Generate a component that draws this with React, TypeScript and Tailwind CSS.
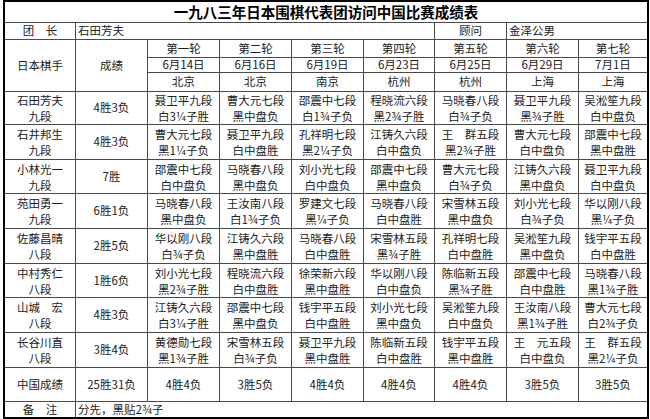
import React from "react";

const rounds = [
  ["第一轮", "6月14日", "北京"],
  ["第二轮", "6月16日", "北京"],
  ["第三轮", "6月19日", "南京"],
  ["第四轮", "6月23日", "杭州"],
  ["第五轮", "6月25日", "杭州"],
  ["第六轮", "6月29日", "上海"],
  ["第七轮", "7月1日", "上海"],
];

type Row = { name: string; rank: string; score: string; games: [string, string][] };

const rows: Row[] = [
  {
    name: "石田芳夫", rank: "九段", score: "4胜3负",
    games: [
      ["聂卫平九段", "白3¼子胜"], ["曹大元七段", "黑中盘负"], ["邵震中七段", "白1¾子负"],
      ["程晓流六段", "黑2¾子胜"], ["马晓春八段", "白¾子负"], ["聂卫平九段", "黑¾子胜"], ["吴淞笙九段", "白中盘负"],
    ],
  },
  {
    name: "石井邦生", rank: "九段", score: "4胜3负",
    games: [
      ["曹大元七段", "黑1¼子负"], ["聂卫平九段", "白中盘胜"], ["孔祥明七段", "黑2¼子负"],
      ["江铸久六段", "白中盘负"], ["王　群五段", "黑2¾子胜"], ["曹大元七段", "白中盘负"], ["邵震中七段", "黑中盘胜"],
    ],
  },
  {
    name: "小林光一", rank: "九段", score: "7胜",
    games: [
      ["邵震中七段", "白中盘负"], ["马晓春八段", "黑中盘负"], ["刘小光七段", "白中盘负"],
      ["邵震中七段", "黑中盘负"], ["曹大元七段", "白¾子负"], ["江铸久六段", "黑中盘负"], ["聂卫平九段", "白中盘负"],
    ],
  },
  {
    name: "苑田勇一", rank: "九段", score: "6胜1负",
    games: [
      ["马晓春八段", "黑中盘负"], ["王汝南八段", "白1¾子负"], ["罗建文七段", "黑¼子负"],
      ["马晓春八段", "白中盘胜"], ["宋雪林五段", "黑中盘负"], ["刘小光七段", "白¾子负"], ["华以刚八段", "黑¼子负"],
    ],
  },
  {
    name: "佐藤昌晴", rank: "八段", score: "2胜5负",
    games: [
      ["华以刚八段", "白¾子负"], ["江铸久六段", "黑中盘胜"], ["马晓春八段", "白中盘胜"],
      ["宋雪林五段", "黑¾子胜"], ["孔祥明七段", "白中盘胜"], ["吴淞笙九段", "黑中盘负"], ["钱宇平五段", "白中盘胜"],
    ],
  },
  {
    name: "中村秀仁", rank: "八段", score: "1胜6负",
    games: [
      ["刘小光七段", "黑2¾子胜"], ["程晓流六段", "白中盘胜"], ["徐荣新六段", "黑中盘胜"],
      ["华以刚八段", "白中盘负"], ["陈临新五段", "黑¾子胜"], ["邵震中七段", "白中盘胜"], ["马晓春八段", "黑1¾子胜"],
    ],
  },
  {
    name: "山城　宏", rank: "八段", score: "4胜3负",
    games: [
      ["江铸久六段", "白3¼子胜"], ["邵震中七段", "黑中盘负"], ["钱宇平五段", "白中盘胜"],
      ["刘小光七段", "黑中盘负"], ["吴淞笙九段", "白中盘负"], ["王汝南八段", "黑1¾子胜"], ["曹大元七段", "白2¾子负"],
    ],
  },
  {
    name: "长谷川直", rank: "八段", score: "3胜4负",
    games: [
      ["黄德勋七段", "黑1¾子胜"], ["宋雪林五段", "白¾子负"], ["聂卫平九段", "黑中盘胜"],
      ["陈临新五段", "白中盘胜"], ["钱宇平五段", "黑中盘胜"], ["王　元五段", "白中盘负"], ["王　群五段", "黑2¼子负"],
    ],
  },
];

const china = ["4胜4负", "3胜5负", "4胜4负", "4胜4负", "4胜4负", "3胜5负", "3胜5负"];

const cell = "bg-white flex flex-col items-center justify-center";

export default function App() {
  return (
    <div
      className="w-[650px] h-[419px] bg-white overflow-hidden text-[#222] text-[11.5px]"
      style={{ fontFamily: '"Noto Sans CJK SC", "Noto Sans", sans-serif' }}
    >
      <div className="ml-[3px] w-[646px] border-2 border-black bg-[#4a4a4a] grid gap-px grid-cols-[70px_71px_71px_71px_71px_70px_71px_71px_68px] grid-rows-[20px_16px_17px_14px_18px_32px_34px_33px_34px_34px_33px_34px_34px_33px_15px]">
        <div className={`${cell} col-span-9 text-[14.5px] font-bold text-black leading-none`}>
          一九八三年日本围棋代表团访问中国比赛成绩表
        </div>

        <div className={`${cell} leading-none`}>团　长</div>
        <div className="bg-white col-span-5 flex items-center pl-[2px] leading-none">石田芳夫</div>
        <div className={`${cell} leading-none`}>顾问</div>
        <div className="bg-white col-span-2 flex items-center pl-[2px] leading-none">金泽公男</div>

        <div className={`${cell} row-span-3 leading-none`}>日本棋手</div>
        <div className={`${cell} row-span-3 leading-none`}>成绩</div>
        {rounds.map((r) => (
          <div key={r[0]} className={`${cell} leading-none`}>{r[0]}</div>
        ))}
        {rounds.map((r) => (
          <div key={r[1]} className={`${cell} leading-none`}>{r[1]}</div>
        ))}
        {rounds.map((r, i) => (
          <div key={"c" + i} className={`${cell} leading-none`}>{r[2]}</div>
        ))}

        {rows.map((row) => (
          <React.Fragment key={row.name}>
            <div className={`${cell} leading-[16px]`}>
              <span>{row.name}</span>
              <span>{row.rank}</span>
            </div>
            <div className={`${cell} leading-none`}>{row.score}</div>
            {row.games.map((g, i) => (
              <div key={i} className={`${cell} leading-[16px]`}>
                <span>{g[0]}</span>
                <span>{g[1]}</span>
              </div>
            ))}
          </React.Fragment>
        ))}

        <div className={`${cell} leading-none`}>中国成绩</div>
        <div className={`${cell} leading-none`}>25胜31负</div>
        {china.map((c, i) => (
          <div key={"z" + i} className={`${cell} leading-none`}>{c}</div>
        ))}

        <div className={`${cell} leading-none`}>备　注</div>
        <div className="bg-white col-span-8 flex items-center pl-[2px] leading-none">分先，黑贴2¾子</div>
      </div>
    </div>
  );
}
